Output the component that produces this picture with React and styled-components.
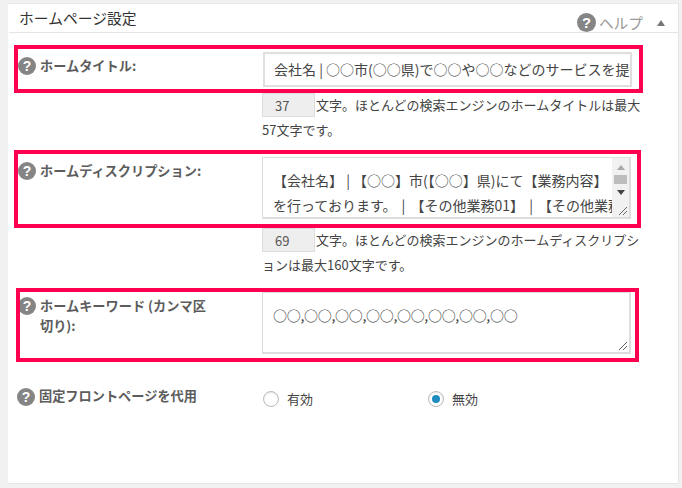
import React from 'react';
import styled, { createGlobalStyle } from 'styled-components';

const GlobalStyle = createGlobalStyle`
  html, body {
    margin: 0;
    padding: 0;
    background: #f1f1f1;
  }
  body {
    width: 682px;
    height: 488px;
    overflow: hidden;
    font-family: "Noto Sans CJK JP", "Liberation Sans", sans-serif;
    font-size: 13px;
    color: #444;
  }
`;

const Panel = styled.section`
  box-sizing: border-box;
  width: 671px;
  height: 481px;
  margin: 3px 0 0 8px;
  background: #fff;
  border: 1px solid #e5e5e5;
  border-left-color: #fff;
  border-top-color: #e8e8e8;
`;

const PanelHeader = styled.header`
  box-sizing: border-box;
  height: 29px;
  display: flex;
  align-items: center;
  padding: 0 13px 0 10px;
  border-bottom: 1px solid #e5e5e5;
`;

const PanelTitle = styled.h2`
  flex: 1;
  margin: -1px 0 0;
  font-size: 14.8px;
  font-weight: 400;
  line-height: 28px;
  color: #333;
`;

const HelpLink = styled.span`
  display: flex;
  align-items: center;
  gap: 3px;
  margin-top: 9px;
  font-size: 14.7px;
  line-height: 18px;
  color: #999;
`;

const Caret = styled.span`
  width: 0;
  height: 0;
  margin: 9px 0 0 14px;
  border: 4px solid transparent;
  border-top: 0;
  border-bottom: 6px solid #777;
`;

const Highlight = styled.div`
  box-sizing: border-box;
  display: grid;
  grid-template-columns: ${p => p.$labelWidth}px 1fr;
  width: ${p => p.$width}px;
  height: ${p => p.$height}px;
  margin: ${p => p.$top}px 0 0 ${p => p.$left}px;
  padding-top: ${p => p.$pad}px;
  border: 4px solid #ff0050;
`;

const Label = styled.label`
  display: flex;
  align-items: flex-start;
  gap: 4px;
  padding-top: ${p => p.$pad}px;
  font-weight: 700;
  font-size: 13.2px;
  line-height: 20px;
  color: #5c5c5c;
`;

const Help = styled.svg`
  flex: none;
  display: block;
  width: 18px;
  height: 18px;
  margin-left: ${p => p.$shift || 0}px;
  clip-path: ${p => (p.$shift ? `inset(0 0 0 ${-p.$shift}px)` : 'none')};
`;

const LabelText = styled.span`
  width: 172px;
  margin-top: ${p => p.$raise || -1}px;
`;

const TextInput = styled.input`
  box-sizing: border-box;
  display: block;
  width: 369px;
  height: 35px;
  padding: 0 0 2px 9px;
  border: 2px solid #e2dede;
  outline: 0;
  background: #fff;
  font: 400 14px "Noto Sans CJK JP", sans-serif;
  color: #444;
`;

const TextBox = styled.div`
  position: relative;
  box-sizing: border-box;
  display: flex;
  width: 369px;
  height: 62px;
  border: 1px solid #ddd;
  border-width: 1px 2px 2px 1px;
  background: #fff;
  font-size: 14px;
  color: #444;
`;

const TextLines = styled.div`
  flex: 1;
  min-width: 0;
  overflow: hidden;
  padding: ${p => p.$pad}px 0 0 10px;
  line-height: 25px;
  white-space: nowrap;
  letter-spacing: ${p => (p.$tight ? '-0.3px' : 'normal')};
  color: ${p => (p.$tight ? '#333' : 'inherit')};
`;

const TextLine = styled.div`
  text-spacing-trim: ${p => (p.$wide ? 'space-all' : 'normal')};
  word-spacing: ${p => (p.$wide ? '2px' : 'normal')};
`;

const Scrollbar = styled.div`
  flex: none;
  display: flex;
  flex-direction: column;
  align-items: center;
  width: 17px;
  height: 100%;
  background: #f1f1f1;
`;

const ScrollThumb = styled.div`
  width: 13px;
  height: 9px;
  margin: 5px 0 6px;
  background: #bdbdbd;
`;

const Arrow = styled.span`
  width: 0;
  height: 0;
  margin-top: ${p => p.$top}px;
  border: 4px solid transparent;
  ${p => (p.$down
    ? 'border-bottom: 0; border-top: 5px solid #444;'
    : 'border-top: 0; border-bottom: 5px solid #a8a8a8;')}
`;

const Grip = styled.svg`
  position: absolute;
  right: 1px;
  bottom: 1px;
  width: 10px;
  height: 10px;
`;

const Note = styled.div`
  margin-left: 253px;
  white-space: nowrap;
`;

const NoteLine = styled.div`
  display: flex;
  align-items: center;
  height: ${p => p.$height}px;
  line-height: 24px;
`;

const Counter = styled.input`
  box-sizing: border-box;
  width: 53px;
  height: 24px;
  margin-right: 1px;
  padding: 0 0 0 12px;
  border: 1px solid #ddd;
  outline: 0;
  background: #eee;
  font: 400 13px "Noto Sans CJK JP", sans-serif;
  color: #555;
`;

const PlainRow = styled.div`
  display: grid;
  grid-template-columns: 246px 1fr;
  margin: 26px 0 0 8px;
`;

const RadioGroup = styled.div`
  display: flex;
  padding-top: 3px;
`;

const RadioLabel = styled.span`
  display: flex;
  align-items: center;
  gap: 8px;
  width: 165px;
  height: 16px;
  margin-top: -1px;
`;

const RadioDot = styled.span`
  box-sizing: border-box;
  display: flex;
  align-items: center;
  justify-content: center;
  width: 16px;
  height: 16px;
  margin-top: 2px;
  border: 1px solid #bbb;
  border-radius: 50%;
  box-shadow: inset 0 1px 2px rgba(0, 0, 0, 0.1);
  &::after {
    content: '';
    width: 8px;
    height: 8px;
    border-radius: 50%;
    background: ${p => (p.$on ? '#1e8cbe' : 'transparent')};
  }
`;

const HelpIcon = ({ shift, size }) => (
  <Help viewBox="0 0 18 18" $shift={shift} style={size ? { width: size, height: size } : undefined}>
    <circle cx="9" cy="9" r="9" fill="#858585" />
    <text x="9" y="14" textAnchor="middle" fontSize="14" fontWeight="700" fontFamily="Liberation Sans, sans-serif" fill="#fff">?</text>
  </Help>
);

const ResizeGrip = () => (
  <Grip viewBox="0 0 10 10">
    <path d="M1 9 9 1M5 9 9 5" stroke="#666" strokeWidth="1" fill="none" />
  </Grip>
);

const App = () => (
  <>
    <GlobalStyle />
    <Panel>
      <PanelHeader>
        <PanelTitle>ホームページ設定</PanelTitle>
        <HelpLink>
          <HelpIcon size={19} />
          ヘルプ
        </HelpLink>
        <Caret />
      </PanelHeader>

      <Highlight $top={12} $left={5} $width={629} $height={48} $labelWidth={245} $pad={3}>
        <Label $pad={5}>
          <HelpIcon />
          <LabelText>ホームタイトル:</LabelText>
        </Label>
        <TextInput readOnly value="会社名 | ○○市(○○県)で○○や○○などのサービスを提供しています" />
      </Highlight>
      <Note>
        <NoteLine $height={24}>
          <Counter readOnly value="37" />
          文字。ほとんどの検索エンジンのホームタイトルは最大
        </NoteLine>
        <NoteLine $height={25}>57文字です。</NoteLine>
      </Note>

      <Highlight $top={8} $left={5} $width={627} $height={78} $labelWidth={244} $pad={3}>
        <Label $pad={5}>
          <HelpIcon />
          <LabelText>ホームディスクリプション:</LabelText>
        </Label>
        <TextBox>
          <TextLines $pad={10}>
            <TextLine>【会社名】 | 【○○】市(【○○】県)にて【業務内容】</TextLine>
            <TextLine $wide>を行っております。 | 【その他業務01】 | 【その他業務02】</TextLine>
          </TextLines>
          <Scrollbar>
            <Arrow $top={7} />
            <ScrollThumb />
            <Arrow $down $top={0} />
          </Scrollbar>
          <ResizeGrip />
        </TextBox>
      </Highlight>
      <Note>
        <NoteLine $height={24}>
          <Counter readOnly value="69" />
          文字。ほとんどの検索エンジンのホームディスクリプシ
        </NoteLine>
        <NoteLine $height={25}>ョンは最大160文字です。</NoteLine>
      </Note>

      <Highlight $top={11} $left={7} $width={623} $height={74} $labelWidth={242} $pad={0}>
        <Label $pad={5}>
          <HelpIcon shift={-2} />
          <LabelText>ホームキーワード (カンマ区切り):</LabelText>
        </Label>
        <TextBox>
          <TextLines $pad={10} $tight>○○,○○,○○,○○,○○,○○,○○,○○</TextLines>
          <ResizeGrip />
        </TextBox>
      </Highlight>

      <PlainRow>
        <Label $pad={0}>
          <HelpIcon />
          <LabelText $raise={-2}>固定フロントページを代用</LabelText>
        </Label>
        <RadioGroup>
          <RadioLabel>
            <RadioDot />
            有効
          </RadioLabel>
          <RadioLabel>
            <RadioDot $on />
            無効
          </RadioLabel>
        </RadioGroup>
      </PlainRow>
    </Panel>
  </>
);

export default App;
